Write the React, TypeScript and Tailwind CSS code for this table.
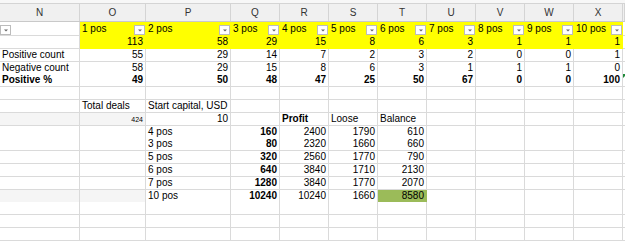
import React from "react"

type C = { t?: string; right?: boolean; bold?: boolean; fill?: "y" | "g" | "s"; dd?: boolean; small?: boolean; flag?: boolean }

const cols = ["N", "O", "P", "Q", "R", "S", "T", "U", "V", "W", "X", ""]
const grid = "grid grid-cols-[80px_66px_85px_49px_49px_49px_49px_49px_49px_49px_49px_1fr]"

const n = (v: number | string, bold = false, fill?: "y" | "g" | "s"): C => ({ t: String(v), right: true, bold, fill })
const s = (v: string, bold = false): C => ({ t: v, bold })
const E: C = {}

const counts = [113, 58, 29, 15, 8, 6, 3, 1, 1, 1]
const pos = [55, 29, 14, 7, 2, 3, 2, 0, 0, 1]
const neg = [58, 29, 15, 8, 6, 3, 1, 1, 1, 0]
const pct = [49, 50, 48, 47, 25, 50, 67, 0, 0, 100]

const calc: [string, number, number, number, number][] = [
  ["4 pos", 160, 2400, 1790, 610],
  ["3 pos", 80, 2320, 1660, 660],
  ["5 pos", 320, 2560, 1770, 790],
  ["6 pos", 640, 3840, 1710, 2130],
  ["7 pos", 1280, 3840, 1770, 2070],
  ["10 pos", 10240, 10240, 1660, 8580],
]

const rows: { h: string; cells: C[] }[] = [
  { h: "h-[14px]", cells: [{ dd: true }, ...counts.map((_, i) => ({ t: `${i + 1} pos`, dd: true, fill: "y" as const })), {}] },
  { h: "h-[13px]", cells: [E, ...counts.map((v) => n(v, false, "y")), E] },
  { h: "h-[13px]", cells: [s("Positive count"), ...pos.map((v) => n(v)), E] },
  { h: "h-[12px]", cells: [s("Negative count"), ...neg.map((v) => n(v)), E] },
  { h: "h-[13px]", cells: [s("Positive %", true), ...pct.map((v) => n(v, true)), { flag: true }] },
  { h: "h-[13px]", cells: [] },
  { h: "h-[13px]", cells: [E, s("Total deals"), s("Start capital, USD")] },
  { h: "h-[13px]", cells: [{ fill: "s" }, { t: "424", right: true, small: true, fill: "s" }, n(10), E, s("Profit", true), s("Loose"), s("Balance")] },
  ...calc.map(([label, a, b, c, d], i) => ({
    h: i === 0 || i === 5 ? "h-[12px]" : "h-[13px]",
    cells: [i === 5 ? { fill: "s" as const } : E, i === 5 ? { fill: "s" as const } : E, s(label), n(a, true), n(b), n(c), n(d, false, i === 5 ? "g" : undefined)],
  })),
  { h: "h-[13px]", cells: [] },
  { h: "h-[13px]", cells: [] },
  { h: "h-[13px]", cells: [] },
]

// filter button in the header cells
const Dropdown = () => (
  <span className="w-[11px] h-[10px] shrink-0 border border-[#bcbcbc] bg-white flex items-center justify-center">
    <svg width="4" height="3" viewBox="0 0 4 3">
      <polygon points="0,0.5 4,0.5 2,2.5" fill="#666" />
    </svg>
  </span>
)

const Cell = ({ c }: { c: C }) => {
  const fill =
    c.fill === "y"
      ? "bg-[#ffff00] border-[#ffff00]"
      : c.fill === "g"
        ? "bg-[#9bbb59] border-[#9bbb59]"
        : c.fill === "s"
          ? "bg-[#f5f5f5] border-[#dadada]"
          : "bg-white border-[#dadada]"
  return (
    <div
      className={`relative flex items-end border-r border-b min-w-0 overflow-visible ${fill} ${
        c.dd ? "justify-between" : c.right ? "justify-end pr-[2px]" : "justify-start pl-[2px]"
      }`}
    >
      {c.t && (
        <span
          className={`whitespace-nowrap ${c.small ? "text-[7px] leading-[9px] pb-[1px]" : "text-[10px] leading-[12px]"} ${
            c.bold ? "font-bold" : "font-normal"
          } ${c.dd ? "pl-[2px]" : ""}`}
        >
          {c.t}
        </span>
      )}
      {c.dd && <Dropdown />}
      {c.flag && (
        <svg className="absolute left-0 top-0" width="4" height="4" viewBox="0 0 4 4">
          <polygon points="0,0 4,0 0,4" fill="#1f8a3a" />
        </svg>
      )}
    </div>
  )
}

export default function App() {
  return (
    <div className="w-[625px] h-[245px] overflow-hidden bg-white text-black font-['Liberation_Sans',Arial,sans-serif]">
      <div className="h-[4px] bg-[#f7f7f7] border-b border-[#d4d4d4]" />
      <div className={`${grid} h-[18px] bg-[#f0f0f0] border-b border-[#c9c9c9]`}>
        {cols.map((l, i) => (
          <div key={i} className="flex items-center justify-center border-r border-[#d4d4d4] text-[10px] text-[#333]">
            {l}
          </div>
        ))}
      </div>
      {rows.map((r, ri) => (
        <div key={ri} className={`${grid} ${r.h}`}>
          {cols.map((_, ci) => (
            <Cell key={ci} c={r.cells[ci] ?? E} />
          ))}
        </div>
      ))}
    </div>
  )
}
